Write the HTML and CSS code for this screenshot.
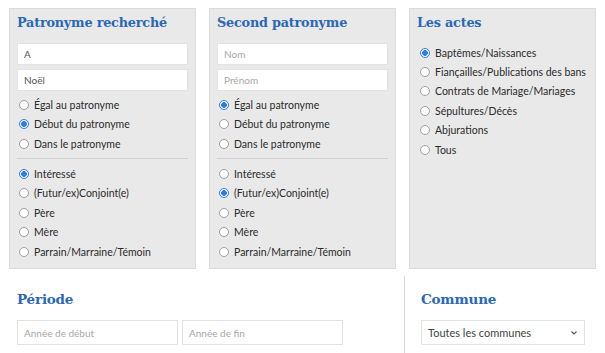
FILE: index.html
```html
<!DOCTYPE html>
<html lang="fr">
<head>
<meta charset="utf-8">
<link rel="stylesheet" href="styles.css">
</head>
<body>
<div class="top">
  <section class="panel">
    <h2 class="title">Patronyme recherché</h2>
    <div class="field">A</div>
    <div class="field">Noël</div>
    <ul class="opts">
      <li><span class="radio"></span>Égal au patronyme</li>
      <li><span class="radio on"></span>Début du patronyme</li>
      <li><span class="radio"></span>Dans le patronyme</li>
    </ul>
    <hr class="sep">
    <ul class="opts">
      <li><span class="radio on"></span>Intéressé</li>
      <li><span class="radio"></span>(Futur/ex)Conjoint(e)</li>
      <li><span class="radio"></span>Père</li>
      <li><span class="radio"></span>Mère</li>
      <li><span class="radio"></span>Parrain/Marraine/Témoin</li>
    </ul>
  </section>
  <section class="panel">
    <h2 class="title">Second patronyme</h2>
    <div class="field ph">Nom</div>
    <div class="field ph">Prénom</div>
    <ul class="opts">
      <li><span class="radio on"></span>Égal au patronyme</li>
      <li><span class="radio"></span>Début du patronyme</li>
      <li><span class="radio"></span>Dans le patronyme</li>
    </ul>
    <hr class="sep">
    <ul class="opts">
      <li><span class="radio"></span>Intéressé</li>
      <li><span class="radio on"></span>(Futur/ex)Conjoint(e)</li>
      <li><span class="radio"></span>Père</li>
      <li><span class="radio"></span>Mère</li>
      <li><span class="radio"></span>Parrain/Marraine/Témoin</li>
    </ul>
  </section>
  <section class="panel">
    <h2 class="title">Les actes</h2>
    <ul class="opts actes">
      <li><span class="radio on"></span>Baptêmes/Naissances</li>
      <li><span class="radio"></span>Fiançailles/Publications des bans</li>
      <li><span class="radio"></span>Contrats de Mariage/Mariages</li>
      <li><span class="radio"></span>Sépultures/Décès</li>
      <li><span class="radio"></span>Abjurations</li>
      <li><span class="radio"></span>Tous</li>
    </ul>
  </section>
</div>
<div class="bottom">
  <section class="periode">
    <h2 class="title">Période</h2>
    <div class="pair">
      <div class="field ph wide">Année de début</div>
      <div class="field ph wide">Année de fin</div>
    </div>
  </section>
  <section class="commune">
    <h2 class="title">Commune</h2>
    <div class="field select">Toutes les communes<svg class="chev" width="8" height="6" viewBox="0 0 8 6"><path d="M1.5 1.5 L4 4 L6.5 1.5" fill="none" stroke="#555" stroke-width="1.1"/></svg></div>
  </section>
</div>
</body>
</html>
```
FILE: styles.css
```css
html, body { margin: 0; padding: 0; background: #fff; }
body { font-family: "Lato", "Liberation Sans", sans-serif; color: #333; width: 605px; height: 353px; overflow: hidden; }
.top { display: grid; grid-template-columns: 187px 187px 187px; column-gap: 13px; padding: 8px 0 0 9px; }
.panel { background: #e9e9e9; border: 1px solid #dcdcdc; height: 261px; box-sizing: border-box; padding: 5px 7px 0 7px; }
.title { font-family: "DejaVu Serif", "Liberation Serif", serif; font-weight: bold; font-size: 12.8px; color: #2a67b5; margin: 0; line-height: 18px; letter-spacing: -0.2px; }
.panel .title { margin-bottom: 11px; }
.field { background: #fff; border: 1px solid #e2e2e2; height: 22px; box-sizing: border-box; font-size: 10px; color: #555; padding-left: 6px; display: flex; align-items: center; margin-bottom: 4px; }
.field.ph { color: #a8a8a8; }
.opts { list-style: none; margin: 0; padding: 0 0 0 2px; }
.opts li { height: 19.6px; display: flex; align-items: center; font-size: 10.5px; color: #2b2b2b; }
.radio { width: 8px; height: 8px; border: 1px solid #a0a0a0; border-radius: 50%; background: #fff; margin-right: 5px; box-sizing: content-box; flex: none; }
.radio.on { border-color: #2f7ee8; background: radial-gradient(circle, #2f7ee8 0 2.6px, #fff 3.1px); }
.sep { border: 0; border-top: 1px solid #d2d2d2; margin: 4px 0 5px 0; }
.actes { padding-left: 3px; }
.actes li { height: 19.4px; }
.bottom { display: flex; margin-top: 7px; }
.periode { width: 404px; padding: 14px 0 0 17px; box-sizing: border-box; }
.periode .title, .commune .title { margin-bottom: 12px; font-size: 13.5px; }
.pair { display: flex; gap: 4px; }
.wide { width: 161px; height: 25px; }
.commune { border-left: 1px solid #d8d8d8; padding: 14px 0 0 16px; height: 80px; box-sizing: border-box; }
.select { width: 164px; height: 25px; justify-content: space-between; padding-right: 6px; color: #444; font-size: 11px; }
.chev { flex: none; }
```
